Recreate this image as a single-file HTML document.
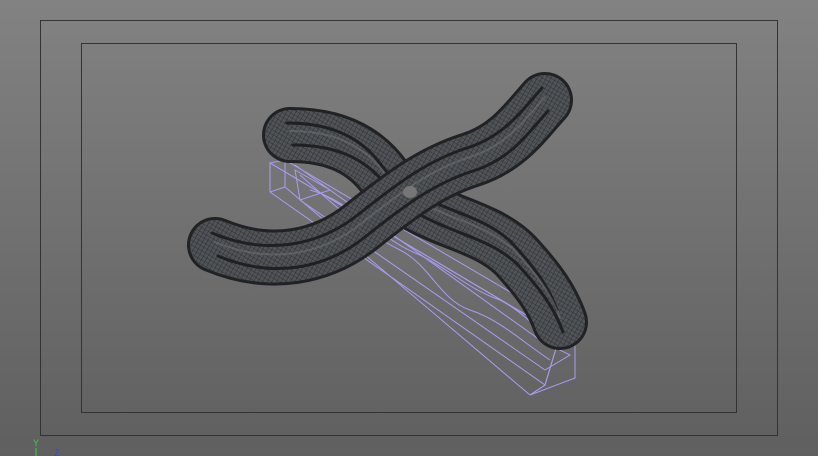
<!DOCTYPE html>
<html><head><style>
html,body{margin:0;padding:0;}
body{width:818px;height:456px;overflow:hidden;background:linear-gradient(#828282,#5f5f5f);position:relative;font-family:"Liberation Sans",sans-serif;}
</style></head><body>
<svg width="818" height="456" style="position:absolute;left:0;top:0">
<defs>
<pattern id="h" width="4" height="4" patternUnits="userSpaceOnUse" patternTransform="rotate(30)">
<rect width="4" height="4" fill="#505458"/><path d="M0 0H4M0 0V4" stroke="#26282a" stroke-width="0.8"/>
</pattern>
<path id="b" d="M290,135 C335,135 365,150 385,178 C420,222 480,220 515,255 C540,282 552,300 560,322"/>
<path id="a" d="M215,245 C270,268 322,258 362,226 C402,194 432,172 470,160 C508,148 525,122 545,100"/>
</defs>
<rect x="40.5" y="20.5" width="737" height="415" fill="none" stroke="#333" stroke-width="1"/>
<rect x="81.5" y="43.5" width="655" height="369" fill="none" stroke="#333" stroke-width="1"/>
<g stroke="#a99cf0" stroke-width="1" fill="none">
<polygon points="270,163 285,160 575,330 560,335"/>
<polygon points="270,163 270,192 545,385 560,335"/>
<polygon points="560,335 575,330 575,378 530,395 545,385"/>
<path d="M270,192 L285,187 L530,395 M285,160 L285,187 M545,385 L530,395"/>
<path d="M295,170 L330,190 L300,200 Z M295,165 L540,340 M300,200 L545,370 M540,340 L570,355 L545,370"/>
<path d="M300,175 C340,210 360,230 400,250 C430,265 440,300 470,310 C500,320 520,340 550,360"/>
<path d="M310,190 C350,200 380,240 420,255 C450,270 470,290 500,300 C520,310 540,330 560,350"/>
</g>
<g fill="none" stroke-linecap="round">
<use href="#b" stroke="#202224" stroke-width="56"/>
<use href="#b" stroke="url(#h)" stroke-width="50"/>
<use href="#b" stroke="#1e2022" stroke-width="3" transform="translate(-3,-12)"/>
<use href="#b" stroke="#1e2022" stroke-width="3" transform="translate(3,10)"/>
<use href="#b" stroke="#6a6e72" stroke-width="2" transform="translate(0,-4)" opacity="0.6"/>
<use href="#a" stroke="#202224" stroke-width="56"/>
<use href="#a" stroke="url(#h)" stroke-width="50"/>
<use href="#a" stroke="#1e2022" stroke-width="3" transform="translate(-3,-12)"/>
<use href="#a" stroke="#1e2022" stroke-width="3" transform="translate(3,11)"/>
<use href="#a" stroke="#6a6e72" stroke-width="2" transform="translate(0,-3)" opacity="0.6"/>
</g>
<ellipse cx="410" cy="192" rx="7" ry="6" fill="#767676"/>
<text x="33" y="446" font-size="9" fill="#3fcf3f">Y</text>
<path d="M36,448V456" stroke="#3fcf3f" stroke-width="1"/>
<text x="54" y="456" font-size="9" fill="#4040e0">Z</text>
</svg>
</body></html>
